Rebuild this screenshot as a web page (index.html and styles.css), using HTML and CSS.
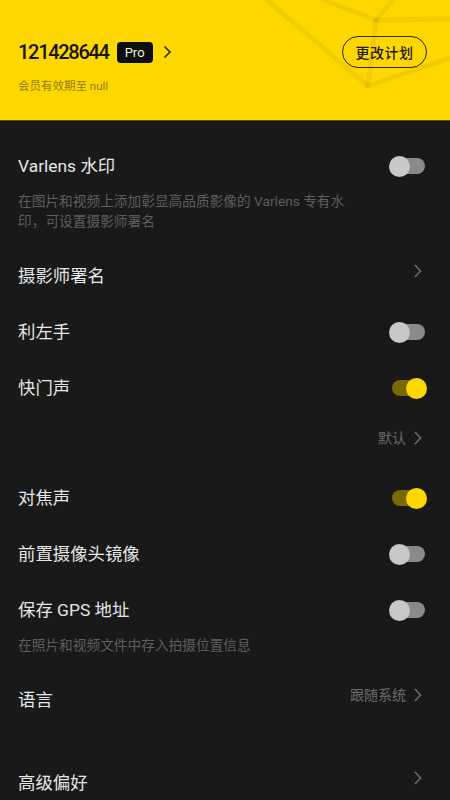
FILE: index.html
```html
<!DOCTYPE html>
<html lang="zh-CN">
<head>
<meta charset="utf-8">
<title>设置</title>
<link rel="stylesheet" href="styles.css">
</head>
<body>
<div class="header">
  <svg class="deco" width="450" height="120" viewBox="0 0 450 120">
    <g stroke="#000" stroke-opacity="0.05" stroke-width="5" fill="none" stroke-linecap="round">
      <path d="M267 0 L368 86 L450 58"/>
      <path d="M323 0 L376 20 L393 0"/>
      <path d="M376 20 L450 19"/>
      <path d="M376 20 L368 86"/>
    </g>
  </svg>
  <div class="acct">
    <div class="idrow">
      <span class="uid">121428644</span>
      <span class="pro">Pro</span>
      <svg class="chev-dark" width="9" height="14" viewBox="0 0 9 14"><path d="M1.5 1.5 L7 7 L1.5 12.5" fill="none" stroke="#2a2a1a" stroke-width="1.6"/></svg>
    </div>
    <div class="expire">会员有效期至 null</div>
  </div>
  <div class="plan">更改计划</div>
</div>

<div class="list">
  <div class="block">
    <div class="row-inner">
      <span class="title">Varlens 水印</span>
      <span class="toggle"></span>
    </div>
    <p class="desc">在图片和视频上添加彰显高品质影像的 Varlens 专有水印，可设置摄影师署名</p>
  </div>

  <div class="row">
    <span class="title">摄影师署名</span>
    <span class="right"><svg class="chev" width="8" height="14" viewBox="0 0 8 14"><path d="M1 1 L6.5 7 L1 13" fill="none" stroke="#6f6f6f" stroke-width="1.5"/></svg></span>
  </div>

  <div class="row">
    <span class="title">利左手</span>
    <span class="toggle"></span>
  </div>

  <div class="row">
    <span class="title">快门声</span>
    <span class="toggle on"></span>
  </div>

  <div class="subrow">
    <span class="value">默认</span>
    <svg class="chev" width="8" height="14" viewBox="0 0 8 14"><path d="M1 1 L6.5 7 L1 13" fill="none" stroke="#6f6f6f" stroke-width="1.5"/></svg>
  </div>

  <div class="row">
    <span class="title">对焦声</span>
    <span class="toggle on"></span>
  </div>

  <div class="row">
    <span class="title">前置摄像头镜像</span>
    <span class="toggle"></span>
  </div>

  <div class="block gps">
    <div class="row-inner">
      <span class="title">保存 GPS 地址</span>
      <span class="toggle"></span>
    </div>
    <p class="desc">在照片和视频文件中存入拍摄位置信息</p>
  </div>

  <div class="row">
    <span class="title">语言</span>
    <span class="right"><span class="value">跟随系统</span><svg class="chev" width="8" height="14" viewBox="0 0 8 14"><path d="M1 1 L6.5 7 L1 13" fill="none" stroke="#6f6f6f" stroke-width="1.5"/></svg></span>
  </div>

  <div class="row advanced">
    <span class="title">高级偏好</span>
    <span class="right"><svg class="chev" width="8" height="14" viewBox="0 0 8 14"><path d="M1 1 L6.5 7 L1 13" fill="none" stroke="#6f6f6f" stroke-width="1.5"/></svg></span>
  </div>
</div>
</body>
</html>
```

FILE: styles.css
```css
* { box-sizing: border-box; }
html, body { margin: 0; padding: 0; }
body {
  width: 450px;
  height: 800px;
  overflow: hidden;
  background: #191919;
  font-family: "Roboto", "Noto Sans CJK SC", sans-serif;
}

.header {
  position: relative;
  height: 121px;
  background: #fed700;
  border-bottom: 1px solid #5c5214;
  display: flex;
  justify-content: space-between;
  align-items: flex-start;
  padding: 36px 23px 0 18px;
}
.deco { position: absolute; left: 0; top: 0; }
.acct { position: relative; display: flex; flex-direction: column; }
.idrow { display: flex; align-items: center; height: 32px; }
.uid {
  font-size: 20px;
  letter-spacing: -1.3px;
  color: #141414;
  font-weight: 500;
}
.pro {
  margin-left: 8px;
  width: 36px;
  height: 21px;
  border-radius: 4px;
  background: #0d0d0d;
  color: #f4f0d8;
  font-size: 13px;
  display: flex;
  align-items: center;
  justify-content: center;
}
.chev-dark { margin-left: 10px; }
.expire {
  margin-top: 10px;
  font-size: 11.5px;
  line-height: 16px;
  color: #8f7c14;
}
.plan {
  position: relative;
  width: 85px;
  height: 32px;
  border: 1.5px solid #2a2616;
  border-radius: 16px;
  display: flex;
  align-items: center;
  justify-content: center;
  font-size: 14px;
  font-weight: 500;
  color: #1c1a10;
  letter-spacing: 0.5px;
}

.list { padding: 17px 23px 0 18px; }
.title {
  font-size: 17.4px;
  color: #e6e6e6;
  line-height: 24px;
}
.row {
  height: 56px;
  display: flex;
  align-items: center;
  justify-content: space-between;
}
.row-inner {
  height: 24px;
  display: flex;
  align-items: center;
  justify-content: space-between;
}
.block { padding: 16px 0 17px; }
.desc {
  margin: 13px 0 0;
  max-width: 345px;
  font-size: 13.7px;
  line-height: 20px;
  color: #5e5e5e;
}
.right {
  display: flex;
  align-items: center;
  margin-bottom: 11px;
}
.value {
  font-size: 14px;
  color: #6a6a6a;
  line-height: 20px;
}
.chev { margin-left: 8px; margin-right: 5px; display: block; }
.right .chev:first-child { margin-left: 0; }
.subrow {
  height: 54px;
  display: flex;
  justify-content: flex-end;
  align-items: flex-start;
  padding-top: 12px;
}
.subrow .chev { margin-top: 3px; }
.advanced { margin-top: 27px; }

.toggle {
  position: relative;
  width: 38px;
  height: 21px;
  flex: none;
}
.toggle::before {
  content: "";
  position: absolute;
  left: 1px;
  top: 2.5px;
  width: 35px;
  height: 16px;
  border-radius: 8px;
  background: #8a8a8a;
}
.toggle::after {
  content: "";
  position: absolute;
  left: 0;
  top: 0;
  width: 21px;
  height: 21px;
  border-radius: 50%;
  background: #c8c8c8;
}
.toggle.on::before { left: 3px; width: 33px; background: #7a6800; }
.toggle.on::after { left: 17px; background: #fed700; }
```
